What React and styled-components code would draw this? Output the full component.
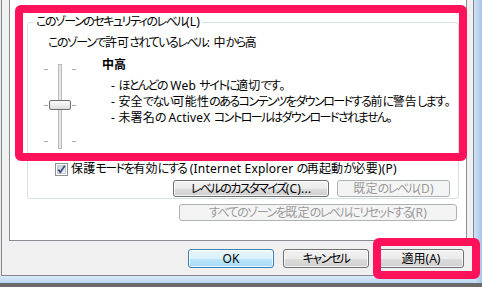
import React from "react";
import styled, { createGlobalStyle } from "styled-components";

const Global = createGlobalStyle`
  html, body { margin: 0; padding: 0; background: #e9e9e9; }
  body {
    font-family: "Noto Sans", "Noto Sans CJK JP", sans-serif;
    font-size: 12px;
    color: #000;
  }
  * { box-sizing: border-box; }
`;

const Screen = styled.div`
  position: relative;
  width: 482px;
  height: 287px;
  overflow: hidden;
  display: grid;
  grid-template-columns: 474px 8px;
  grid-template-rows: 276px 7px 4px;
  background: #e9e9e9;
`;

const Dialog = styled.div`
  grid-column: 1;
  grid-row: 1;
  margin-left: 1px;
  background: #f0f0f0;
  border: 1px solid #838790;
  border-top: none;
  padding: 0 6px 0 7px;
  display: flex;
  flex-direction: column;
`;

const RightFrame = styled.div`
  grid-column: 2;
  grid-row: 1 / 3;
  background: linear-gradient(90deg, #cfe2f6 0%, #b6d0ec 60%, #a9c6e6 100%);
`;

const BottomFrame = styled.div`
  grid-column: 1;
  grid-row: 2;
  background: linear-gradient(180deg, #d9e9f9 0%, #bcd6f1 100%);
`;

const BottomShade = styled.div`
  grid-column: 1 / 3;
  grid-row: 3;
  background: #6a6a6a;
`;

const Panel = styled.div`
  height: 241px;
  background: #fff;
  border: 1px solid #898c95;
  border-top: none;
  padding: 14px 7px 0 17px;
  display: flex;
  flex-direction: column;
`;

const Group = styled.fieldset`
  margin: 0;
  padding: 5px 8px 1px 0;
  border: 1px solid #d5dfe5;
  border-radius: 3px;
  display: flex;
  flex-direction: column;
  min-width: 0;
`;

const Legend = styled.legend`
  margin-left: 6px;
  padding: 0 2px;
  line-height: 16px;
  font-size: 12px;
  font-feature-settings: "palt";
  white-space: nowrap;
`;

const Text = styled.div`
  line-height: 16px;
  font-feature-settings: "palt";
  white-space: nowrap;
  margin-left: ${(p) => p.$indent || 0}px;
  font-weight: ${(p) => (p.$bold ? 700 : 400)};
`;

const KanaRun = styled.span`
  letter-spacing: -1.5px;
`;

const OtherRun = styled.span`
  letter-spacing: 0.2px;
`;

const LevelArea = styled.div`
  display: flex;
  margin-top: 6px;
`;

const SliderBox = styled.div`
  width: 60px;
  margin-left: 14px;
  height: 92px;
`;

const Description = styled.div`
  display: flex;
  flex-direction: column;
`;

const Bullets = styled.ul`
  list-style: none;
  margin: 5px 0 0 9px;
  padding: 0;
`;

const Bullet = styled.li`
  line-height: 16px;
  font-feature-settings: "palt";
  white-space: nowrap;
`;

const CheckRow = styled.label`
  display: flex;
  align-items: center;
  gap: 3px;
  margin: 12px 0 0 27px;
  line-height: 16px;
  font-feature-settings: "palt";
  white-space: nowrap;
`;

const ButtonRow = styled.div`
  display: flex;
  justify-content: flex-end;
  gap: 8px;
  margin-top: 3px;
`;

const Button = styled.button`
  height: ${(p) => p.$h || 17}px;
  width: ${(p) => p.$w}px;
  padding: 0;
  font-family: inherit;
  font-size: 12px;
  line-height: 14px;
  font-feature-settings: "palt";
  white-space: nowrap;
  border-radius: 3px;
  border: 1px solid ${(p) => (p.disabled ? "#adb2b5" : p.$default ? "#3c7fb1" : "#707070")};
  color: ${(p) => (p.disabled ? "#9a9a9a" : "#000")};
  background: ${(p) =>
    p.disabled
      ? "#f4f4f4"
      : p.$default
      ? "linear-gradient(180deg, #eaf6fd 0%, #d9f0fc 50%, #bee6fd 51%, #a7d9f5 100%)"
      : "linear-gradient(180deg, #f2f2f2 0%, #ebebeb 50%, #dddddd 51%, #cfcfcf 100%)"};
  box-shadow: inset 0 0 0 1px ${(p) => (p.disabled ? "#f4f4f4" : "rgba(255,255,255,0.75)")};
`;

const ResetRow = styled.div`
  display: flex;
  justify-content: flex-end;
  margin: 5px 2px 0 0;
`;

const DialogButtons = styled.div`
  display: flex;
  justify-content: flex-end;
  gap: 9px;
  margin: 8px 3px 0 0;
`;

const Highlight = styled.div`
  position: absolute;
  left: ${(p) => p.$x}px;
  top: ${(p) => p.$y}px;
  width: ${(p) => p.$w}px;
  height: ${(p) => p.$h}px;
  border: 8px solid #ff1259;
  border-radius: 6px;
  pointer-events: none;
`;

// Narrows kana runs to approximate the compact Meiryo UI kana widths.
function J({ children }) {
  const parts = String(children).split(/([\u3040-\u30ff]+)/).filter(Boolean);
  return parts.map((p, i) =>
    /^[\u3040-\u30ff]+$/.test(p) ? <KanaRun key={i}>{p}</KanaRun> : <OtherRun key={i}>{p}</OtherRun>
  );
}

function Slider() {
  const ticks = [12, 48, 84];
  return (
    <svg width="60" height="92" viewBox="0 0 60 92">
      <defs>
        <linearGradient id="thumb" x1="0" y1="0" x2="0" y2="1">
          <stop offset="0" stopColor="#fbfbfb" />
          <stop offset="0.5" stopColor="#eeeeee" />
          <stop offset="1" stopColor="#d8d8d8" />
        </linearGradient>
      </defs>
      <rect x="16.5" y="7.5" width="3" height="84" fill="#e8e8e8" stroke="#b9b9b9" />
      {ticks.map((t) => (
        <g key={t} stroke="#a7a7a7">
          <line x1="2" y1={t + 0.5} x2="6" y2={t + 0.5} />
          <line x1="30" y1={t + 0.5} x2="34" y2={t + 0.5} />
        </g>
      ))}
      <rect x="7.5" y="43.5" width="21" height="9" rx="1.5" fill="url(#thumb)" stroke="#6f6f6f" />
    </svg>
  );
}

function CheckBox() {
  return (
    <svg width="13" height="13" viewBox="0 0 13 13">
      <defs>
        <linearGradient id="cb" x1="0" y1="0" x2="1" y2="1">
          <stop offset="0" stopColor="#cbcfd5" />
          <stop offset="1" stopColor="#f6f6f6" />
        </linearGradient>
      </defs>
      <rect x="0.5" y="0.5" width="12" height="12" fill="#fff" stroke="#8e8f8f" />
      <rect x="2.5" y="2.5" width="8" height="8" fill="url(#cb)" stroke="#c5c8cd" />
      <path d="M3.3 6.4 L5.3 9.2 L9.8 2.8" fill="none" stroke="#3b4f83" strokeWidth="1.8" />
    </svg>
  );
}

export default function App() {
  return (
    <>
      <Global />
      <Screen>
        <Dialog>
          <Panel>
            <Group>
              <Legend><J>このゾーンのセキュリティのレベル(L)</J></Legend>
              <Text $indent={20}><J>このゾーンで許可されているレベル: 中から高</J></Text>
              <LevelArea>
                <SliderBox>
                  <Slider />
                </SliderBox>
                <Description>
                  <Text $bold>中高</Text>
                  <Bullets>
                    <Bullet><J>- ほとんどの Web サイトに適切です。</J></Bullet>
                    <Bullet><J>- 安全でない可能性のあるコンテンツをダウンロードする前に警告します。</J></Bullet>
                    <Bullet><J>- 未署名の ActiveX コントロールはダウンロードされません。</J></Bullet>
                  </Bullets>
                </Description>
              </LevelArea>
              <CheckRow>
                <CheckBox />
                <span><J>保護モードを有効にする (Internet Explorer の再起動が必要)(P)</J></span>
              </CheckRow>
              <ButtonRow>
                <Button $w={156}><J>レベルのカスタマイズ(C)...</J></Button>
                <Button $w={113} disabled><J>既定のレベル(D)</J></Button>
              </ButtonRow>
            </Group>
            <ResetRow>
              <Button $w={278} disabled><J>すべてのゾーンを既定のレベルにリセットする(R)</J></Button>
            </ResetRow>
          </Panel>
          <DialogButtons>
            <Button $w={86} $h={19} $default>OK</Button>
            <Button $w={86} $h={19}><J>キャンセル</J></Button>
            <Button $w={86} $h={19}>適用(A)</Button>
          </DialogButtons>
        </Dialog>
        <RightFrame />
        <BottomFrame />
        <BottomShade />
        <Highlight $x={15} $y={5} $w={452} $h={156} />
        <Highlight $x={373} $y={238} $w={107} $h={41} />
      </Screen>
    </>
  );
}
